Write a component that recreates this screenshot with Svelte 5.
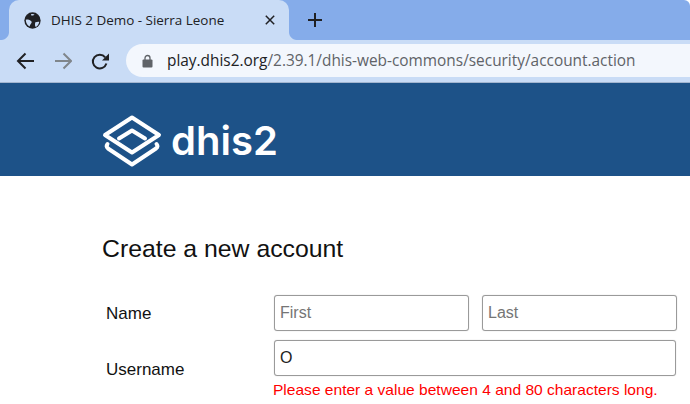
<script>
  let first = "";
  let last = "";
  let username = "O";
</script>

<div class="browser">
  <div class="tabstrip">
    <div class="tab">
      <svg class="globe" width="17" height="17" viewBox="0 0 24 24">
        <circle cx="12" cy="12" r="11.5" fill="#202124" />
        <path d="M2.5 11c2-.5 4-1 6 .5s3 2 2 4-2 2-2.5 5c-3-1-5.5-5-5.5-9.5zM16 14.5c2-.5 4-1 5.5-.5-.5 3-2.5 6-5 7-1.5-2-1-5-.5-6.5zM10 3c2-.5 4 0 5 .5-1 1-3 2-5 1z" fill="#c9dcf6" />
      </svg>
      <span class="title">DHIS 2 Demo - Sierra Leone</span>
      <svg class="close" width="10" height="10" viewBox="0 0 10 10">
        <path d="M.8.8l8.4 8.4M9.2.8L.8 9.2" stroke="#202124" stroke-width="1.5" fill="none" />
      </svg>
    </div>
    <svg class="plus" width="14" height="14" viewBox="0 0 14 14">
      <path d="M7 0v14M0 7h14" stroke="#202124" stroke-width="2" fill="none" />
    </svg>
  </div>

  <div class="toolbar">
    <svg class="nav" width="20" height="20" viewBox="0 0 20 20">
      <path d="M19 10H3.5M10.5 2.5L3 10l7.5 7.5" stroke="#202124" stroke-width="2" fill="none" />
    </svg>
    <svg class="nav" width="20" height="20" viewBox="0 0 20 20">
      <path d="M3 10h15.500M11.500 2.500L19 10l-7.500 7.500" stroke="#80868b" stroke-width="2" fill="none" />
    </svg>
    <svg class="nav" width="20" height="20" viewBox="0 0 20 20">
      <path d="M17.400 12.500a6.900 6.900 0 1 1-1.200-6.200" stroke="#202124" stroke-width="2" fill="none" />
      <path d="M20 2.500v7h-7z" fill="#202124" />
    </svg>
    <div class="omnibox">
      <svg class="lock" width="11" height="14" viewBox="0 0 11 14">
        <path d="M3 6V4a2.500 2.500 0 0 1 5 0v2" stroke="#5f6368" stroke-width="1.300" fill="none" />
        <rect x="0.500" y="5.500" width="10" height="8" rx="1" fill="#5f6368" />
      </svg>
      <span class="url"><span class="host">play.dhis2.org</span>/2.39.1/dhis-web-commons/security/account.action</span>
    </div>
  </div>

  <header class="banner">
    <svg class="logo" width="60" height="54" viewBox="0 0 60 54">
      <path d="M30 3.500L57 21 30 38.500 3 21z" fill="none" stroke="#fff" stroke-width="4" stroke-linejoin="round" />
      <path d="M17 24.500L30 16.500 43 24.500" fill="none" stroke="#fff" stroke-width="4" stroke-linejoin="round" stroke-linecap="round" />
      <path d="M5.500 30Q3.500 32.500 6 34.500L30 50.500 54 34.500Q56.500 32.500 54.500 30" fill="none" stroke="#fff" stroke-width="4" stroke-linejoin="round" stroke-linecap="round" />
    </svg>
    <span class="wordmark">dhis2</span>
  </header>
</div>

<main class="content">
  <h1>Create a new account</h1>
  <div class="form">
    <div class="row">
      <label for="first">Name</label>
      <div class="fields">
        <input id="first" placeholder="First" bind:value={first} />
        <input id="last" placeholder="Last" bind:value={last} />
      </div>
    </div>
    <div class="row">
      <label for="username" class="low">Username</label>
      <div class="single">
        <input id="username" bind:value={username} />
        <p class="error">Please enter a value between 4 and 80 characters long.</p>
      </div>
    </div>
  </div>
</main>

<style>
  :global(body) {
    margin: 0;
    background: #fff;
    overflow: hidden;
  }

  .browser {
    font-family: "Open Sans", sans-serif;
  }

  .tabstrip {
    height: 40px;
    background: #85acea;
    border-top-right-radius: 6px;
    display: flex;
    align-items: flex-end;
    padding-left: 9px;
  }

  .tab {
    position: relative;
    width: 280px;
    height: 40px;
    box-sizing: border-box;
    background: #c9dcf6;
    border-radius: 10px 10px 0 0;
    display: flex;
    align-items: center;
    padding: 0 14px 0 15px;
    color: #202124;
  }

  /* flared corners at the foot of the active tab */
  .tab::before,
  .tab::after {
    content: "";
    position: absolute;
    bottom: 0;
    width: 8px;
    height: 8px;
  }

  .tab::before {
    left: -8px;
    background: radial-gradient(circle at 0 0, #85acea 7.5px, #c9dcf6 8.5px);
  }

  .tab::after {
    right: -8px;
    background: radial-gradient(circle at 100% 0, #85acea 7.5px, #c9dcf6 8.5px);
  }

  .globe {
    flex: none;
  }

  .title {
    margin-left: 10px;
    font-size: 13.45px;
    flex: 1;
    white-space: nowrap;
  }

  .plus {
    margin: 0 0 13px 19px;
  }

  .toolbar {
    height: 43px;
    box-sizing: border-box;
    background: #c9dcf6;
    display: flex;
    align-items: center;
    padding: 4px 0 5px 15px;
    gap: 17px;
    border-bottom: 1px solid #a3b6d0;
  }

  .nav {
    flex: none;
  }

  .omnibox {
    flex: 1;
    height: 33px;
    background: #f3f7fd;
    border-radius: 17px 0 0 17px;
    display: flex;
    align-items: center;
    padding-left: 16px;
  }

  .lock {
    flex: none;
  }

  .url {
    margin-left: 14px;
    font-size: 15.4px;
    color: #5f6368;
    white-space: nowrap;
  }

  .host {
    color: #202124;
  }

  .banner {
    height: 93px;
    box-sizing: border-box;
    background: #1d5288;
    display: flex;
    align-items: center;
    padding: 23px 0 0 102px;
    gap: 9px;
  }

  .logo {
    flex: none;
  }

  .wordmark {
    font-family: "Inter", sans-serif;
    font-size: 40px;
    font-weight: 600;
    color: #fff;
    margin-bottom: 2px;
  }

  .content {
    padding: 58px 13px 0 102px;
    font-family: "Liberation Sans", Arial, sans-serif;
    color: #222;
  }

  h1 {
    margin: 0 0 31px;
    font-size: 24.8px;
    line-height: 30px;
    font-weight: 400;
    color: #111;
  }

  .form {
    display: flex;
    flex-direction: column;
    gap: 9px;
  }

  .row {
    display: flex;
  }

  label {
    width: 172px;
    flex: none;
    padding: 9px 0 0 4px;
    box-sizing: border-box;
    font-size: 17px;
    line-height: 20px;
    color: #111;
  }

  label.low {
    padding-top: 20px;
  }

  .fields {
    flex: 1;
    display: flex;
    gap: 13px;
  }

  .fields input {
    flex: 1;
    min-width: 0;
  }

  .single {
    flex: 1;
    margin-right: 1px;
  }

  input {
    display: block;
    width: 100%;
    height: 36px;
    box-sizing: border-box;
    border: 1px solid #9a9a9a;
    border-radius: 3px;
    padding: 0 5px;
    font: 16px "Liberation Sans", Arial, sans-serif;
    color: #222;
    background: #fff;
    box-shadow: 0 0 1px #bbb;
  }

  input::placeholder {
    color: #757575;
    opacity: 1;
  }

  .error {
    margin: 4px 0 0 -1px;
    font-size: 15.55px;
    line-height: 20px;
    color: #f00;
    white-space: nowrap;
  }
</style>
